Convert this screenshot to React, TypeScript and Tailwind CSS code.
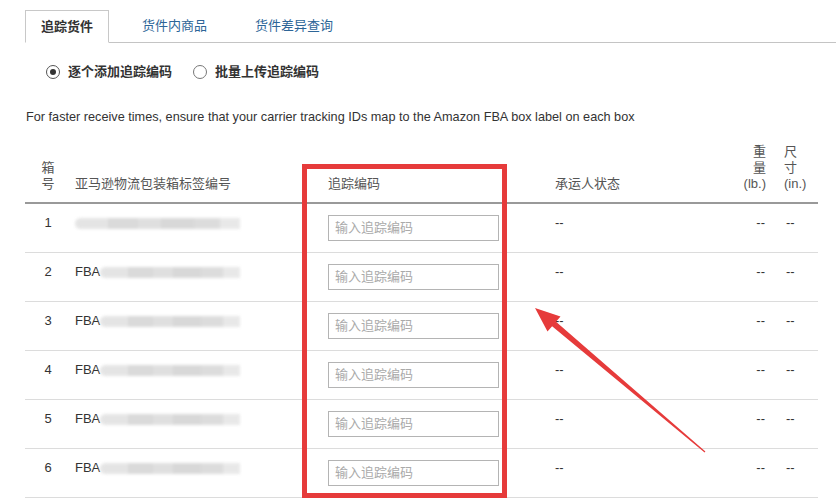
import React from "react";

const font = { fontFamily: '"Liberation Sans", "Noto Sans CJK SC", sans-serif' };

function Blur({ full }: { full?: boolean }) {
  return (
    <div className={`flex h-[11px] ${full ? "w-[165px]" : "w-[140px]"} blur-[1.5px] opacity-90`}>
      <div className="h-full w-[20%] rounded-l-full bg-[#e2e2e2]" />
      <div className="h-full w-[18%] bg-[#d6d6d6]" />
      <div className="h-full w-[14%] bg-[#dcdcdc]" />
      <div className="h-full w-[20%] bg-[#d4d4d4]" />
      <div className="h-full w-[16%] bg-[#d9d9d9]" />
      <div className="h-full w-[12%] bg-[#e6e6e6]" />
    </div>
  );
}

export default function App() {
  const rows = [1, 2, 3, 4, 5, 6];
  return (
    <div className="relative h-[500px] w-[836px] overflow-hidden bg-white text-[13px] text-[#333]" style={font}>
      {/* tabs */}
      <div className="ml-[25px] flex items-end border-b border-[#c4c4c4] pt-[10px]">
        <div className="-mb-px flex h-[33px] items-center border border-[#c8c8c8] border-b-white bg-white px-[15px] text-[13px] font-bold text-[#333]">
          追踪货件
        </div>
        <div className="ml-[33px] flex h-[32px] items-center text-[#2d6597]">货件内商品</div>
        <div className="ml-[48px] flex h-[32px] items-center text-[#2d6597]">货件差异查询</div>
      </div>

      {/* radios */}
      <div className="mt-[19px] flex h-[20px] items-center pl-[46px] font-bold text-[#333]">
        <span className="flex h-[14px] w-[14px] items-center justify-center rounded-full border border-[#555]">
          <span className="h-[6px] w-[6px] rounded-full bg-[#333]" />
        </span>
        <span className="ml-[8px]">逐个添加追踪编码</span>
        <span className="ml-[21px] h-[14px] w-[14px] rounded-full border border-[#777]" />
        <span className="ml-[8px]">批量上传追踪编码</span>
      </div>

      {/* description */}
      <div className="mt-[25px] h-[20px] pl-[26px] text-[12.7px] leading-[20px] text-[#333]">
        For faster receive times, ensure that your carrier tracking IDs map to the Amazon FBA box label on each box
      </div>

      {/* table */}
      <div className="ml-[25px] mt-[17px] w-[793px]">
        <div className="grid grid-cols-[46px_250px_227px_158px_60px_52px] items-end border-b-2 border-[#999] pb-[10px] leading-[16px] text-[#555]">
          <div className="text-center">
            箱<br />号
          </div>
          <div className="pl-[4px]">亚马逊物流包装箱标签编号</div>
          <div className="pl-[7px]">追踪编码</div>
          <div className="pl-[7px]">承运人状态</div>
          <div className="text-right">
            重<br />量<br />(lb.)
          </div>
          <div className="pl-[18px]">
            尺<br />寸<br />(in.)
          </div>
        </div>
        {rows.map((n) => (
          <div
            key={n}
            className="grid h-[49px] grid-cols-[46px_250px_227px_158px_60px_52px] border-b border-[#dcdcdc] leading-[20px] text-[#333]"
          >
            <div className="pt-[9px] text-center">{n}</div>
            <div className="flex h-[38px] items-center pl-[4px]">
              {n === 1 ? (
                <Blur full />
              ) : (
                <>
                  <span>FBA</span>
                  <Blur />
                </>
              )}
            </div>
            <div className="pl-[7px] pt-[11px]">
              <div className="flex h-[26px] w-[171px] items-center border border-[#b4b4b4] pl-[6px] text-[#aaa]">
                输入追踪编码
              </div>
            </div>
            <div className="pl-[7px] pt-[9px]">--</div>
            <div className="pr-[1px] pt-[9px] text-right">--</div>
            <div className="pl-[20px] pt-[9px]">--</div>
          </div>
        ))}
      </div>

      {/* red annotation box */}
      <div className="absolute left-[302px] top-[164px] h-[334px] w-[205px] border-[5px] border-[#e63b3b]" />

      {/* red arrow */}
      <svg className="absolute left-0 top-0" width="836" height="500" viewBox="0 0 836 500">
        <polygon
          points="535,308 560.5,316.4 556,321.7 705.4,451.5 704.6,452.5 552.1,326.3 547.5,331.6"
          fill="#e63b3b"
        />
      </svg>
    </div>
  );
}
